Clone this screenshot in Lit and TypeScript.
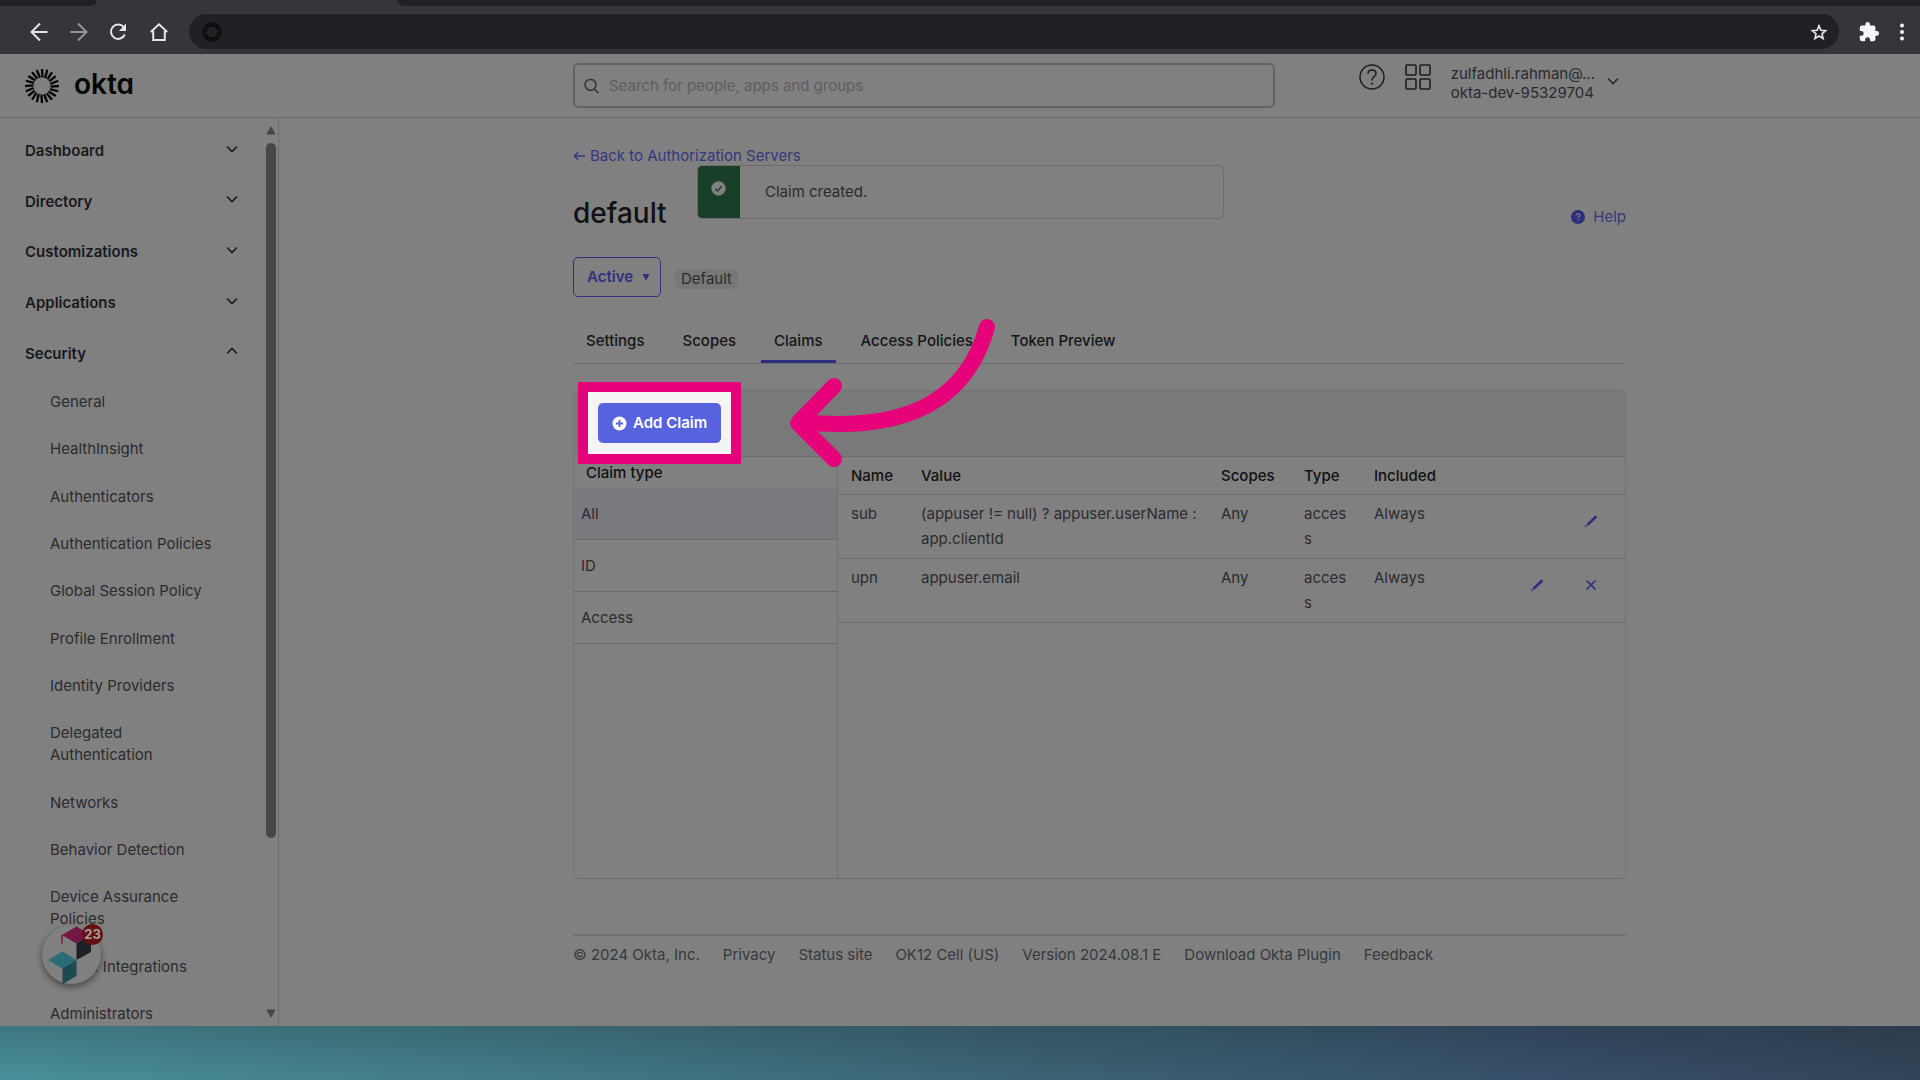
import { LitElement, html, css, svg } from "lit";
import { customElement } from "lit/decorators.js";
import { classMap } from "lit/directives/class-map.js";

const chevron = (up = false) => html`
  <svg class="chevron" width="12" height="8" viewBox="0 0 12 8" aria-hidden="true">
    <path d=${up ? "M1 6.5 6 1.5l5 5" : "M1 1.5l5 5 5-5"} fill="none" stroke="currentColor" stroke-width="1.6" />
  </svg>`;

const rays = (count: number, cx: number, inner: number, outer: number, width: number) =>
  Array.from({ length: count }, (_, i) => {
    const a = (i * 360) / count;
    return svg`<path d="M${cx + 0.6} ${cx - inner}L${cx} ${cx - outer}" transform="rotate(${a} ${cx} ${cx})"
      stroke="currentColor" stroke-width=${width} />`;
  });

const base = css`
  :host {
    display: block;
    font-family: Inter, "Liberation Sans", sans-serif;
    font-size: 15px;
    line-height: 22px;
  }
  * {
    box-sizing: border-box;
  }
  a {
    color: inherit;
    text-decoration: none;
  }
  button {
    font: inherit;
    color: inherit;
    background: none;
    border: 0;
    padding: 0;
    margin: 0;
    cursor: pointer;
  }
  svg {
    display: block;
    flex: none;
  }
  ul {
    list-style: none;
    margin: 0;
    padding: 0;
  }
`;

@customElement("browser-toolbar")
export class BrowserToolbar extends LitElement {
  static styles = [
    base,
    css`
      :host {
        background: #35363a;
        color: #e4e5e7;
      }
      .tabs {
        display: flex;
        height: 6px;
        gap: 301px;
      }
      .strip {
        background: #202124;
      }
      .left {
        width: 97px;
        border-bottom-right-radius: 6px;
      }
      .right {
        flex: 1;
        border-bottom-left-radius: 6px;
      }
      .bar {
        display: flex;
        align-items: center;
        height: 48px;
        padding: 4px 8px 1px 29px;
      }
      .nav {
        display: flex;
        gap: 20px;
        margin-right: 20px;
      }
      .dim {
        color: #96979a;
      }
      .address {
        flex: 1;
        display: flex;
        align-items: center;
        justify-content: space-between;
        height: 35px;
        border-radius: 18px;
        background: #202124;
        padding: 0 11px 0 13px;
      }
      .favicon {
        color: #060607;
      }
      .tools {
        display: flex;
        gap: 12px;
        margin-left: 19px;
      }
    `,
  ];

  render() {
    return html`
      <div class="tabs"><div class="strip left"></div><div class="strip right"></div></div>
      <div class="bar">
        <div class="nav">
          <button aria-label="Back">
            <svg width="20" height="20" viewBox="0 0 20 20"><path d="M18.500 10H2.500M11 1.500 2.500 10l8.500 8.500" fill="none" stroke="currentColor" stroke-width="2" /></svg>
          </button>
          <button aria-label="Forward" class="dim">
            <svg width="20" height="20" viewBox="0 0 20 20"><path d="M1.500 10h16M9 1.500 17.500 10 9 18.500" fill="none" stroke="currentColor" stroke-width="2" /></svg>
          </button>
          <button aria-label="Reload">
            <svg width="20" height="20" viewBox="0 0 20 20">
              <path d="M15.800 12.500A7.200 7.200 0 1 1 14.800 5.200" fill="none" stroke="currentColor" stroke-width="2" />
              <path d="M17 1.500V9h-7z" fill="currentColor" />
            </svg>
          </button>
          <button aria-label="Home">
            <svg width="20" height="20" viewBox="0 0 20 20"><path d="M1.800 10 10 2.300 18.200 10M4.200 9v9h11.600V9" fill="none" stroke="currentColor" stroke-width="2" /></svg>
          </button>
        </div>
        <div class="address">
          <svg class="favicon" width="20" height="20" viewBox="0 0 20 20" aria-hidden="true">${rays(20, 10, 5.5, 10, 1.4)}</svg>
          <button aria-label="Bookmark this page">
            <svg width="18" height="18" viewBox="0 0 24 24"><path d="M12 3.800l2.500 5.800 6.300.6-4.800 4.200 1.400 6.200-5.400-3.300-5.400 3.300L8 14.400l-4.800-4.200 6.300-.6z" fill="none" stroke="currentColor" stroke-width="2.200" /></svg>
          </button>
        </div>
        <div class="tools">
          <button aria-label="Extensions">
            <svg width="22" height="22" viewBox="0 0 24 24"><path d="M20.500 11H19V7a2 2 0 0 0-2-2h-4V3.500a2.500 2.500 0 0 0-5 0V5H4a2 2 0 0 0-2 2v3.800h1.500a2.700 2.700 0 0 1 0 5.400H2V20a2 2 0 0 0 2 2h3.800v-1.500a2.700 2.700 0 0 1 5.400 0V22H17a2 2 0 0 0 2-2v-4h1.500a2.500 2.500 0 0 0 0-5z" fill="#f4f5f6" /></svg>
          </button>
          <button aria-label="Menu">
            <svg width="20" height="20" viewBox="0 0 20 20" fill="#f4f5f6"><circle cx="10" cy="3.500" r="2" /><circle cx="10" cy="10" r="2" /><circle cx="10" cy="16.500" r="2" /></svg>
          </button>
        </div>
      </div>`;
  }
}

@customElement("admin-header")
export class AdminHeader extends LitElement {
  static styles = [
    base,
    css`
      :host {
        display: grid;
        grid-template-columns: 279px 1fr;
        height: 64px;
        background: #808080;
        border-bottom: 1px solid #6b6b6b;
        color: #1c1c20;
      }
      .brand {
        display: flex;
        align-items: center;
        gap: 15px;
        padding-left: 25px;
        color: #050505;
      }
      .wordmark {
        font-size: 28px;
        font-weight: 600;
        line-height: 32px;
        font-feature-settings: "cv11";
        padding-bottom: 3px;
      }
      .inner {
        display: flex;
        align-items: center;
        justify-content: space-between;
        width: 100%;
        max-width: 1053px;
        margin: 0 auto;
      }
      .search {
        display: flex;
        align-items: center;
        gap: 10px;
        flex: 0 0 702px;
        height: 45px;
        padding: 0 9px;
        border: 2px solid #626262;
        border-radius: 5px;
        color: #39393b;
      }
      .search input {
        flex: 1;
        border: 0;
        outline: 0;
        padding: 0;
        background: none;
        font: inherit;
        color: inherit;
      }
      .search input::placeholder {
        color: #5e5e60;
        opacity: 1;
      }
      .actions {
        display: flex;
        align-items: flex-start;
        gap: 20px;
        padding: 0 7px 5px 0;
      }
      .account {
        display: flex;
        align-items: center;
        gap: 12px;
        text-align: left;
        line-height: 19px;
        color: #29292d;
      }
      .account .chevron {
        margin-bottom: 4px;
      }
    `,
  ];

  render() {
    return html`
      <a class="brand" href="#home">
        <svg width="34" height="34" viewBox="0 0 34 34" aria-hidden="true">${rays(20, 17, 8.5, 17, 2.3)}</svg>
        <span class="wordmark">okta</span>
      </a>
      <div class="inner">
        <label class="search">
          <svg width="15" height="16" viewBox="0 0 15 16" aria-hidden="true"><circle cx="6.500" cy="6.800" r="5.500" fill="none" stroke="currentColor" stroke-width="1.700" /><path d="M10.300 10.800 14.300 15" stroke="currentColor" stroke-width="1.700" /></svg>
          <input type="text" placeholder="Search for people, apps and groups" aria-label="Search for people, apps and groups" />
        </label>
        <div class="actions">
          <button aria-label="Help">
            <svg width="26" height="26" viewBox="0 0 26 26" fill="none" stroke="currentColor" stroke-width="1.500">
              <circle cx="13" cy="13" r="12" /><path d="M9 9.800C9 7.300 10.700 6 13 6s4 1.400 4 3.500c0 3-3.800 3-3.800 6.300v.7" /><path d="M13.200 18.500v2" stroke-width="1.800" />
            </svg>
          </button>
          <button aria-label="Apps">
            <svg width="26" height="26" viewBox="0 0 26 26" fill="none" stroke="currentColor" stroke-width="1.600">
              <rect x="1" y="1" width="10" height="10" rx="1" /><rect x="15" y="1" width="10" height="10" rx="1" />
              <rect x="1" y="15" width="10" height="10" rx="1" /><rect x="15" y="15" width="10" height="10" rx="1" />
            </svg>
          </button>
          <button class="account">
            <span>zulfadhli.rahman@...<br />okta-dev-95329704</span>
            ${chevron()}
          </button>
        </div>
      </div>`;
  }
}

@customElement("side-nav")
export class SideNav extends LitElement {
  static styles = [
    base,
    css`
      :host {
        display: flex;
        border-right: 1px solid #6d6d6d;
        color: #2b2b2f;
        overflow: hidden;
      }
      nav {
        flex: 1;
        display: flex;
        flex-direction: column;
        min-height: 0;
        padding: 7px 0 1px 25px;
      }
      .groups {
        display: grid;
        grid-auto-rows: 1fr;
        height: 253px;
        flex: none;
      }
      .group {
        display: flex;
        align-items: center;
        justify-content: space-between;
        padding: 2px 26px 0 0;
        font-weight: 600;
        color: #19191d;
      }
      .group .chevron {
        margin-bottom: 5px;
      }
      .items {
        flex: 1;
        display: flex;
        flex-direction: column;
        justify-content: space-between;
        padding: 13px 44px 0 25px;
      }
      .rail {
        display: flex;
        flex-direction: column;
        align-items: center;
        width: 14px;
        padding: 8px 2px;
        gap: 8px;
        color: #474747;
      }
      .track {
        flex: 1;
        width: 10px;
      }
      .thumb {
        height: 81%;
        border-radius: 5px;
        background: #474747;
      }
    `,
  ];

  groups = ["Dashboard", "Directory", "Customizations", "Applications", "Security"];
  items = [
    "General",
    "HealthInsight",
    "Authenticators",
    "Authentication Policies",
    "Global Session Policy",
    "Profile Enrollment",
    "Identity Providers",
    "Delegated Authentication",
    "Networks",
    "Behavior Detection",
    "Device Assurance Policies",
    "Device Integrations",
    "Administrators",
  ];

  render() {
    return html`
      <nav>
        <div class="groups">
          ${this.groups.map((g) => html`<button class="group"><span>${g}</span>${chevron(g === "Security")}</button>`)}
        </div>
        <ul class="items">
          ${this.items.map((i) => html`<li><a href="#nav">${i}</a></li>`)}
        </ul>
      </nav>
      <div class="rail">
        <svg width="10" height="9" viewBox="0 0 10 9"><path d="M5 1 9 8H1z" fill="currentColor" stroke="currentColor" stroke-linejoin="round" /></svg>
        <div class="track"><div class="thumb"></div></div>
        <svg width="10" height="9" viewBox="0 0 10 9"><path d="M5 8 1 1h8z" fill="currentColor" stroke="currentColor" stroke-linejoin="round" /></svg>
      </div>`;
  }
}

interface Claim {
  name: string;
  value: string;
  removable: boolean;
}

@customElement("claims-panel")
export class ClaimsPanel extends LitElement {
  static styles = [
    base,
    css`
      :host {
        position: relative;
        display: flex;
        flex-direction: column;
        border: 1px solid #737373;
        border-bottom-color: #6c6c6c;
        border-radius: 5px;
        color: #2b2b2f;
      }
      .toolbar {
        height: 66px;
        background: #797979;
        border-bottom: 1px solid #6d6d6d;
        border-radius: 4px 4px 0 0;
      }
      .body {
        display: grid;
        grid-template-columns: 264px 1fr;
        min-height: 421px;
      }
      .types {
        border-right: 1px solid #717171;
      }
      .caption {
        margin: 0;
        padding: 5px 12px 4px;
        font-size: 15px;
        font-weight: 500;
        line-height: 22px;
        color: #111114;
      }
      .type {
        display: block;
        width: 100%;
        height: 52px;
        padding: 0 7px;
        text-align: left;
        border-bottom: 1px solid #6a6a6a;
      }
      .selected {
        background: #797980;
      }
      table {
        width: 100%;
        border-collapse: collapse;
        table-layout: fixed;
        line-height: 25px;
      }
      .name,
      .kind {
        width: 70px;
      }
      .value {
        width: 300px;
      }
      .scopes {
        width: 83px;
      }
      .included {
        width: 91px;
      }
      th,
      td {
        padding: 6px 12px 7px 13px;
        text-align: left;
        vertical-align: top;
        font-weight: 400;
        border-bottom: 1px solid #6d6d6d;
        overflow-wrap: anywhere;
      }
      th {
        padding: 6px 0 6px 13px;
        font-weight: 500;
        color: #111114;
      }
      td.expression {
        padding-right: 6px;
      }
      td.tools {
        padding: 19px 27px 0 0;
      }
      .buttons {
        display: flex;
        justify-content: flex-end;
        gap: 40px;
        color: #2d2e7d;
      }
      .spot {
        position: absolute;
        left: 4px;
        top: -9px;
        padding: 11px 10px;
        border: 10px solid #e6007a;
        background: #f4f4f4;
      }
      .add {
        display: flex;
        align-items: center;
        gap: 6px;
        height: 40px;
        padding: 0 14px;
        border-radius: 5px;
        background: #5662de;
        color: #ffffff;
        font-weight: 600;
      }
      .arrow {
        position: absolute;
        left: 212px;
        top: -77px;
        pointer-events: none;
      }
    `,
  ];

  claims: Claim[] = [
    { name: "sub", value: "(appuser != null) ? appuser.userName : app.clientId", removable: false },
    { name: "upn", value: "appuser.email", removable: true },
  ];

  pencil = html`<button aria-label="Edit claim">
    <svg width="14" height="14" viewBox="0 0 14 14"><path d="M3.300 11 12.400 2.200" stroke="currentColor" stroke-width="2.600" /><path d="M.8 13.200l.6-2.500 1.800 1.800z" fill="currentColor" /></svg>
  </button>`;

  cross = html`<button aria-label="Delete claim">
    <svg width="14" height="14" viewBox="0 0 14 14"><path d="M2.500 2.500l9 9M11.500 2.500l-9 9" stroke="currentColor" stroke-width="1.700" /></svg>
  </button>`;

  render() {
    return html`
      <div class="toolbar"></div>
      <div class="body">
        <div class="types">
          <h2 class="caption">Claim type</h2>
          ${["All", "ID", "Access"].map(
            (t) => html`<button class=${classMap({ type: true, selected: t === "All" })}>${t}</button>`
          )}
        </div>
        <div>
          <table>
            <thead>
              <tr>
                <th class="name">Name</th>
                <th class="value">Value</th>
                <th class="scopes">Scopes</th>
                <th class="kind">Type</th>
                <th class="included">Included</th>
                <th></th>
              </tr>
            </thead>
            <tbody>
              ${this.claims.map(
                (c) => html`<tr>
                  <td>${c.name}</td>
                  <td class="expression">${c.value}</td>
                  <td>Any</td>
                  <td>access</td>
                  <td>Always</td>
                  <td class="tools"><div class="buttons">${this.pencil}${c.removable ? this.cross : null}</div></td>
                </tr>`
              )}
            </tbody>
          </table>
        </div>
      </div>
      <div class="spot">
        <button class="add">
          <svg width="15" height="15" viewBox="0 0 15 15" aria-hidden="true"><circle cx="7.500" cy="7.500" r="7" fill="#ffffff" /><path d="M7.500 4v7M4 7.500h7" stroke="#5662de" stroke-width="1.800" /></svg>
          Add Claim
        </button>
      </div>
      <svg class="arrow" width="216" height="160" viewBox="786 314 216 160" fill="none" stroke="#e6007a" stroke-width="16" stroke-linecap="round" stroke-linejoin="round" aria-hidden="true">
        <path d="M987 327C969 392 918 434 800 422" />
        <path d="M834 386 798 423l36 36" />
      </svg>`;
  }
}

@customElement("server-page")
export class ServerPage extends LitElement {
  static styles = [
    base,
    css`
      :host {
        color: #2b2b2f;
      }
      .column {
        position: relative;
        display: flex;
        flex-direction: column;
        width: 100%;
        max-width: 1053px;
        margin: 0 auto;
        padding-top: 27px;
      }
      .link {
        color: #36377d;
      }
      .back {
        display: flex;
        align-items: center;
        gap: 5px;
      }
      .title {
        display: flex;
        align-items: center;
        justify-content: space-between;
        margin-top: 29px;
      }
      h1 {
        margin: 0;
        font-size: 28px;
        font-weight: 500;
        line-height: 34px;
        color: #111113;
      }
      .help {
        display: flex;
        align-items: center;
        gap: 8px;
        padding-top: 8px;
      }
      .state {
        display: flex;
        align-items: center;
        gap: 14px;
        margin-top: 27px;
      }
      .active {
        display: flex;
        align-items: center;
        gap: 9px;
        height: 40px;
        padding: 0 10px 0 13px;
        border: 1px solid #2f3080;
        border-radius: 5px;
        color: #2f3080;
        font-weight: 600;
      }
      .badge {
        margin-top: 4px;
        padding: 0 6px;
        border-radius: 6px;
        background: #777777;
        line-height: 20px;
      }
      .tabs {
        display: flex;
        gap: 12px;
        margin-top: 22px;
        border-bottom: 1px solid #6b6b6b;
        color: #151518;
        font-weight: 500;
      }
      .tab {
        padding: 11px 13px 8px;
        border-bottom: 3px solid transparent;
      }
      .current {
        border-bottom-color: #2d2e7d;
      }
      claims-panel {
        margin-top: 26px;
      }
      .footer {
        display: flex;
        gap: 23px;
        margin-top: 55px;
        padding-top: 8px;
        border-top: 2px solid #717171;
        color: #38383c;
      }
      .toast {
        position: absolute;
        left: 124px;
        top: 47px;
        width: 527px;
        display: flex;
        align-items: center;
        height: 54px;
        border: 1px solid #6d6d6d;
        border-radius: 5px;
        background: #808080;
        overflow: hidden;
      }
      .ok {
        align-self: stretch;
        width: 42px;
        margin-right: 25px;
        padding: 15px 0 0 13px;
        background: #183f27;
      }
    `,
  ];

  tabs = ["Settings", "Scopes", "Claims", "Access Policies", "Token Preview"];
  links = ["Privacy", "Status site", "OK12 Cell (US)", "Version 2024.08.1 E", "Download Okta Plugin", "Feedback"];

  render() {
    return html`
      <div class="column">
        <a class="link back" href="#servers">
          <svg width="12" height="10" viewBox="0 0 12 10" aria-hidden="true"><path d="M12 5H1.500M5.300 1 1.300 5l4 4" fill="none" stroke="currentColor" stroke-width="1.400" /></svg>
          Back to Authorization Servers
        </a>
        <div class="title">
          <h1>default</h1>
          <a class="link help" href="#help">
            <svg width="14" height="14" viewBox="0 0 14 14" aria-hidden="true"><circle cx="7" cy="7" r="7" fill="#2d2e7d" /><path d="M5.200 5.600c0-1.200.8-1.800 1.800-1.800s1.800.6 1.800 1.600c0 1.300-1.700 1.300-1.700 2.700M7.100 9v1.400" fill="none" stroke="#808080" stroke-width="1.200" /></svg>
            Help
          </a>
        </div>
        <div class="state">
          <button class="active">
            Active
            <svg width="8" height="7" viewBox="0 0 8 7" aria-hidden="true"><path d="M.5 0h7L4 7z" fill="currentColor" /></svg>
          </button>
          <span class="badge">Default</span>
        </div>
        <nav class="tabs">
          ${this.tabs.map((t) => html`<a href="#tab" class=${classMap({ tab: true, current: t === "Claims" })}>${t}</a>`)}
        </nav>
        <claims-panel></claims-panel>
        <footer class="footer">
          <span>© 2024 Okta, Inc.</span>
          ${this.links.map((l) => html`<a href="#footer">${l}</a>`)}
        </footer>
        <div class="toast" role="status">
          <div class="ok">
            <svg width="15" height="15" viewBox="0 0 15 15" aria-hidden="true"><circle cx="7.500" cy="7.500" r="7.200" fill="#808080" /><path d="M4.300 7.800l2.200 2.200 4.300-4.700" fill="none" stroke="#183f27" stroke-width="1.300" /></svg>
          </div>
          Claim created.
        </div>
      </div>`;
  }
}

@customElement("app-root")
export class AppRoot extends LitElement {
  static styles = [
    base,
    css`
      :host {
        display: flex;
        flex-direction: column;
        height: 100vh;
        overflow: hidden;
      }
      .window {
        position: relative;
        flex: 1;
        display: flex;
        flex-direction: column;
        min-height: 0;
        background: #808080;
      }
      .content {
        flex: 1;
        display: grid;
        grid-template-columns: 279px 1fr;
        grid-template-rows: minmax(0, 1fr);
        min-height: 0;
      }
      .desktop {
        height: 54px;
        background: linear-gradient(to bottom, rgba(20, 25, 30, 0.22), rgba(20, 25, 30, 0.02)),
          linear-gradient(to right, #4a929c 0%, #437c89 28%, #3c6475 55%, #37506a 80%, #33465a 100%);
      }
      .chat {
        position: absolute;
        left: 42px;
        bottom: 42px;
        width: 59px;
        height: 59px;
        border-radius: 50%;
        background: #808080;
        box-shadow: 0 3px 7px rgba(0, 0, 0, 0.45);
      }
      .cubes {
        margin-left: 5px;
      }
      .count {
        position: absolute;
        right: -2px;
        top: -1px;
        width: 21px;
        height: 21px;
        border-radius: 50%;
        background: #66110f;
        color: #a3a0a0;
        font-size: 13px;
        font-weight: 700;
        line-height: 21px;
        text-align: center;
      }
    `,
  ];

  render() {
    return html`
      <div class="window">
        <browser-toolbar></browser-toolbar>
        <admin-header></admin-header>
        <div class="content">
          <side-nav></side-nav>
          <server-page></server-page>
        </div>
        <button class="chat" aria-label="Open widget">
          <svg class="cubes" width="46" height="59" viewBox="0 0 46 59" aria-hidden="true">
            <path d="M15 10 29.500 1.500 44 10 29.500 18.500z" fill="#741642" />
            <path d="M15 10v8.500" stroke="#741642" stroke-width="1.500" />
            <path d="M29.500 18.500 44 10v17l-14.500 8z" fill="#1b2126" />
            <path d="M1 35 15.500 26.500 29.500 35 15.500 43.500z" fill="#2b6d74" />
            <path d="M1 35v9" stroke="#5b8387" stroke-width="1.500" />
            <path d="M15.500 43.500 29.500 35v16l-14 8z" fill="#1c4a50" />
          </svg>
          <span class="count">23</span>
        </button>
      </div>
      <div class="desktop"></div>`;
  }
}
